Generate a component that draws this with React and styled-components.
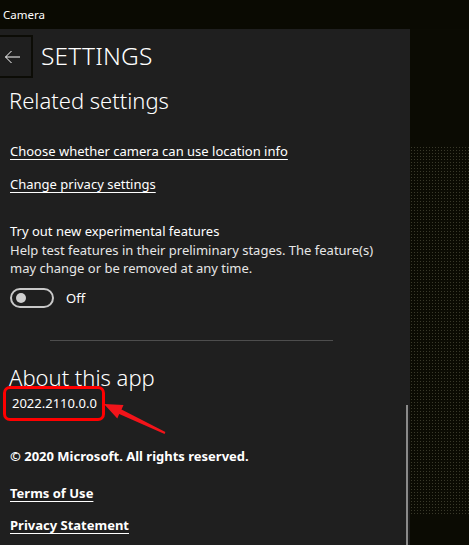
import React from "react";
import styled, { createGlobalStyle } from "styled-components";

const Global = createGlobalStyle`
  html, body { margin: 0; padding: 0; background: #0a0a02; }
  body { font-family: "Noto Sans", "Open Sans", sans-serif; color: #fff; }
  #root { width: 469px; height: 545px; overflow: hidden; }
`;

const Window = styled.div`
  position: relative;
  width: 469px;
  height: 545px;
  display: flex;
  flex-direction: column;
  background: #0a0a02;
  overflow: hidden;
`;

const TitleBar = styled.div`
  height: 29px;
  flex: none;
  display: flex;
  align-items: center;
  padding-left: 3px;
  font-size: 11.5px;
  color: #fff;
`;

const Body = styled.div`
  flex: 1;
  display: flex;
  min-height: 0;
`;

const Panel = styled.div`
  position: relative;
  width: 410px;
  flex: none;
  background: #1f1f1f;
  display: flex;
  flex-direction: column;
`;

const Side = styled.div`
  flex: 1;
  display: flex;
  flex-direction: column;
`;

const SideBlock = styled.div`
  height: ${(p) => p.$h}px;
  flex: ${(p) => (p.$h ? "none" : "1")};
  background-color: #0b0b03;
  ${(p) =>
    p.$dotted &&
    `background-image: radial-gradient(circle, #39392a 0.7px, transparent 0.9px);
     background-size: 3px 3px;`}
`;

const Header = styled.div`
  display: flex;
  align-items: center;
  gap: 8px;
  margin-top: 6px;
`;

const BackButton = styled.div`
  width: 31px;
  height: 39px;
  border: 2px solid #0c0c06;
  border-left: none;
  display: flex;
  align-items: center;
  padding-left: 4px;
  box-sizing: content-box;
  width: 27px;
`;

const PageTitle = styled.div`
  font-size: 24.5px;
  font-weight: 300;
  letter-spacing: 0.2px;
  line-height: 1;
`;

const Content = styled.div`
  padding-left: 10px;
  display: flex;
  flex-direction: column;
`;

const SectionTitle = styled.div`
  font-size: 22px;
  font-weight: 300;
  line-height: 28px;
  margin-top: ${(p) => p.$mt}px;
  margin-left: -1px;
`;

const Link = styled.a`
  font-size: 13px;
  line-height: 18px;
  color: #fff;
  text-decoration: underline;
  text-underline-offset: 3px;
  text-decoration-thickness: 1px;
  font-weight: ${(p) => (p.$bold ? 700 : 400)};
  margin-top: ${(p) => p.$mt}px;
  align-self: flex-start;
`;

const Label = styled.div`
  font-size: 13px;
  line-height: 18px;
  margin-top: ${(p) => p.$mt}px;
  color: #fff;
`;

const Description = styled.div`
  font-size: 13px;
  line-height: 18px;
  color: #e6e6e6;
  width: 392px;
  margin-top: 1px;
`;

const ToggleRow = styled.div`
  display: flex;
  align-items: center;
  gap: 12px;
  margin-top: 11px;
  font-size: 13px;
`;

const Toggle = styled.div`
  box-sizing: border-box;
  width: 44px;
  height: 20px;
  border: 2px solid #c8c8c8;
  border-radius: 10px;
  display: flex;
  align-items: center;
  padding-left: 4px;
`;

const Knob = styled.div`
  width: 10px;
  height: 10px;
  border-radius: 50%;
  background: #cfcfcf;
`;

const Divider = styled.div`
  width: 283px;
  height: 1px;
  background: #4d4d4d;
  margin: 32px 0 0 40px;
`;

const Version = styled.div`
  align-self: flex-start;
  margin: -5px 0 0 -7px;
  padding: 5px 5px 6px 6px;
  border: 3px solid #f00;
  border-radius: 7px;
  font-size: 13px;
  line-height: 18px;
`;

const Copyright = styled.div`
  font-size: 13px;
  font-weight: 700;
  line-height: 18px;
  margin-top: 26px;
`;

const ScrollThumb = styled.div`
  position: absolute;
  right: 2px;
  top: 376px;
  bottom: 0;
  width: 2px;
  background: #8a8a8a;
`;

const Overlay = styled.svg`
  position: absolute;
  left: 0;
  top: 0;
  pointer-events: none;
`;

export default function App() {
  return (
    <>
      <Global />
      <Window>
        <TitleBar>Camera</TitleBar>
        <Body>
          <Panel>
            <Header>
              <BackButton>
                <svg width="17" height="14" viewBox="0 0 17 14">
                  <path d="M16 7H1.5M7.5 1L1.5 7l6 6" fill="none" stroke="#fff" strokeWidth="1" />
                </svg>
              </BackButton>
              <PageTitle>SETTINGS</PageTitle>
            </Header>
            <Content>
              <SectionTitle $mt={8}>Related settings</SectionTitle>
              <Link $mt={28}>Choose whether camera can use location info</Link>
              <Link $mt={15}>Change privacy settings</Link>
              <Label $mt={29}>Try out new experimental features</Label>
              <Description>
                Help test features in their preliminary stages. The feature(s) may change or be removed at any time.
              </Description>
              <ToggleRow>
                <Toggle>
                  <Knob />
                </Toggle>
                <span>Off</span>
              </ToggleRow>
              <Divider />
              <SectionTitle $mt={22}>About this app</SectionTitle>
              <Version>2022.2110.0.0</Version>
              <Copyright>© 2020 Microsoft. All rights reserved.</Copyright>
              <Link $bold $mt={19}>Terms of Use</Link>
              <Link $bold $mt={14}>Privacy Statement</Link>
            </Content>
            <ScrollThumb />
          </Panel>
          <Side>
            <SideBlock $h={117} />
            <SideBlock $h={368} $dotted />
            <SideBlock />
          </Side>
        </Body>
        <Overlay width="469" height="545" viewBox="0 0 469 545">
          <polygon
            points="104,404 123.5,405 121.5,409.6 165.4,432.1 164.6,433.9 119.2,414 117.3,418.5"
            fill="#f2141a"
          />
        </Overlay>
      </Window>
    </>
  );
}
